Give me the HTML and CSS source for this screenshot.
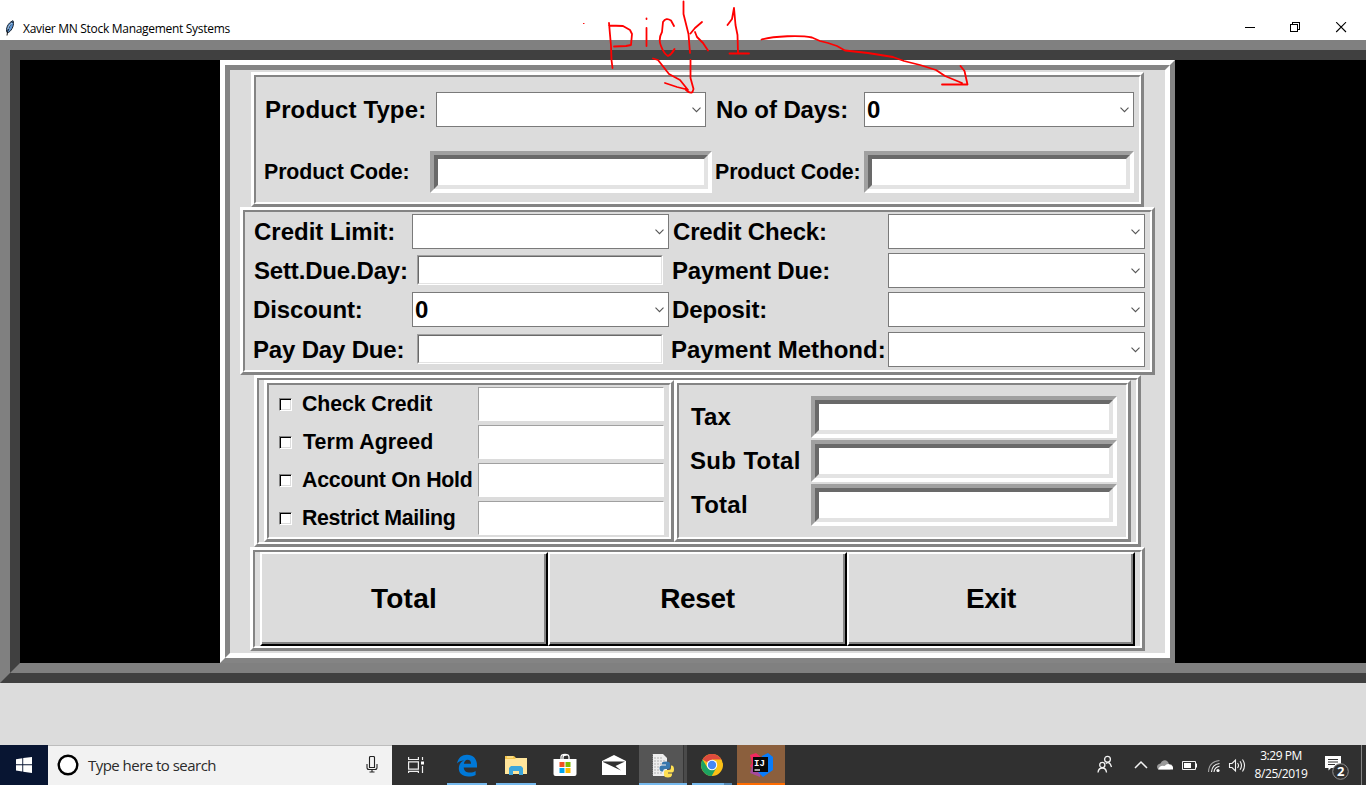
FILE: index.html
```html
<!DOCTYPE html>
<html lang="en">
<head>
<meta charset="utf-8">
<title>Xavier MN Stock Management Systems</title>
<link rel="stylesheet" href="styles.css">
</head>
<body>
<div class="screen">
  <header class="titlebar">
    <svg class="feather" width="12" height="16" viewBox="0 0 12 16"><path d="M3 12.500C1.500 9 3.500 3 9 .7C10.500 4 8.500 10 4.500 12.500Z" fill="#5b93d2" stroke="#17202c" stroke-width="1"/><path d="M8.500 2C5 6 3.600 10 3 15.500" stroke="#111" fill="none"/><path d="M8 3C5.500 5 4.500 7 4 9" stroke="#b8d4f0" fill="none"/></svg>
    <span class="title">Xavier MN Stock Management Systems</span>
    <svg class="winbtns" width="104" height="12" viewBox="0 0 104 12" fill="none" stroke="#000"><path d="M0 5.500H10M45.500 2.500H52.500V9.500H45.500ZM47.500 2.500V.5H54.500V7.500H52.500" shape-rendering="crispEdges"/><path d="M91.200.2L101 10M101 .2L91.200 10" stroke-width="1.100"/></svg>
  </header>

  <main class="outer"><div class="outer-in">
    <div class="panel"><div class="panel-in">

      <section class="frame f1"><div class="frame-in products">
        <label class="lbl t1 wide">Product Type:</label><div class="combo"><svg class="chev" viewBox="0 0 9 6"><path d="M.5.7L4.500 4.700L8.500.7"/></svg></div>
        <label class="lbl t2 snug">No of Days:</label><div class="combo">0<svg class="chev" viewBox="0 0 9 6"><path d="M.5.7L4.500 4.700L8.500.7"/></svg></div>
        <label class="lbl small t3 snug">Product Code:</label><div class="sunken"><div></div></div>
        <label class="lbl small t4 snug">Product Code:</label><div class="sunken e2"><div></div></div>
      </div></section>

      <section class="frame f2"><div class="frame-in credit">
        <label class="lbl">Credit Limit:</label><div class="combo"><svg class="chev" viewBox="0 0 9 6"><path d="M.5.7L4.500 4.700L8.500.7"/></svg></div>
        <label class="lbl r tight">Credit Check:</label><div class="combo"><svg class="chev" viewBox="0 0 9 6"><path d="M.5.7L4.500 4.700L8.500.7"/></svg></div>
        <label class="lbl tight">Sett.Due.Day:</label><div class="sunken thin"><div></div></div>
        <label class="lbl r nudge tight">Payment Due:</label><div class="combo"><svg class="chev" viewBox="0 0 9 6"><path d="M.5.7L4.500 4.700L8.500.7"/></svg></div>
        <label class="lbl nudge snug">Discount:</label><div class="combo">0<svg class="chev" viewBox="0 0 9 6"><path d="M.5.7L4.500 4.700L8.500.7"/></svg></div>
        <label class="lbl r nudge snug">Deposit:</label><div class="combo"><svg class="chev" viewBox="0 0 9 6"><path d="M.5.7L4.500 4.700L8.500.7"/></svg></div>
        <label class="lbl nudge tight">Pay Day Due:</label><div class="sunken thin"><div></div></div>
        <label class="lbl r nudge2">Payment Methond:</label><div class="combo"><svg class="chev" viewBox="0 0 9 6"><path d="M.5.7L4.500 4.700L8.500.7"/></svg></div>
      </div></section>

      <section class="frame f3"><div class="frame-in split">
        <div class="frame f3a"><div class="frame-in checks">
          <div class="check"><i class="box"></i><label class="lbl small snug">Check Credit</label><div class="flat"></div></div>
          <div class="check"><i class="box"></i><label class="lbl small term">Term Agreed</label><div class="flat"></div></div>
          <div class="check"><i class="box"></i><label class="lbl small hold">Account On Hold</label><div class="flat"></div></div>
          <div class="check"><i class="box"></i><label class="lbl small mailing">Restrict Mailing</label><div class="flat"></div></div>
        </div></div>
        <div class="frame f3b"><div class="frame-in totals">
          <label class="lbl wide">Tax</label><div class="sunken"><div></div></div>
          <label class="lbl sub">Sub Total</label><div class="sunken"><div></div></div>
          <label class="lbl wider">Total</label><div class="sunken"><div></div></div>
        </div></div>
      </div></section>

      <section class="frame f4"><div class="frame-in buttons">
        <div class="btn w1 wider"><div>Total</div></div>
        <div class="btn w2 close"><div>Reset</div></div>
        <div class="btn w1 close"><div>Exit</div></div>
      </div></section>

    </div></div>
  </div></main>

  <footer class="taskbar">
    <div class="start"><svg width="16" height="16" viewBox="0 0 16 16" fill="#fff"><path d="M0 2.200L6.300 1.200V7.300H0ZM7.200 1.100L16 0V7.300H7.200ZM0 8.300H6.300V14.500L0 13.600ZM7.200 8.300H16V16L7.200 14.700Z"/></svg></div>
    <div class="search">
      <svg class="cortana" width="22" height="22" viewBox="0 0 22 22"><circle cx="11" cy="11" r="9.300" fill="#fff" stroke="#000" stroke-width="2.400"/></svg>
      <span>Type here to search</span>
      <svg class="mic" width="12" height="17" viewBox="0 0 12 17" fill="none" stroke="#222" stroke-width="1.100"><path d="M3.500 1.500V11.500H8.500V1.500Q8.500.5 7.500.5H4.500Q3.500.5 3.500 1.500ZM1 8V11.500Q1 13.500 3 13.500H9Q11 13.500 11 11.500V8M6 13.500V16M3.500 16H8.500"/></svg>
    </div>
    <div class="app view"><svg width="16" height="17" viewBox="0 0 16 17" fill="none" stroke="#eee" stroke-width="1.200"><path d="M.6 0V2.500H10.400V0M.6 4.800H10.400V12.200H.6ZM.6 16V14.400H10.400V16M14.500 0V3M14.500 9V16"/><path d="M13 4.500H16V7.500H13Z" fill="#fff" stroke="none"/></svg></div>
    <div class="app line"><svg width="22" height="23" viewBox="0 0 22 23"><path d="M1 9.500C2.500 3.500 6 .8 11 .8C17.500.8 21 5.200 21 11.200V13.400H7.700C8 17 10.500 18.500 14 18.500C16.300 18.500 18 18 19.600 17V21C17.500 22 15 22.500 12.300 22.500C6 22.500 2.800 19 2.800 14.300C2.800 10.500 5 7.800 8.200 6.300C5 6.700 2.500 7.800 1 9.500ZM7.900 9.800H15C15 7.300 13.800 5.800 11.600 5.800C9.500 5.800 8.200 7.500 7.900 9.800Z" fill="#0078d7" fill-rule="evenodd"/></svg></div>
    <div class="app line"><svg width="22" height="19" viewBox="0 0 22 19"><path d="M0 0H9L11 2H22V18H0Z" fill="#f4c64e"/><path d="M0 3H10L11 2H22V18H0Z" fill="#ffe59b"/><path d="M4 19V12L6 10H16L18 12V19H14V15H8V19Z" fill="#3ba6dc"/><path d="M2 1H8" stroke="#fff2b8"/></svg></div>
    <div class="app"><svg width="24" height="24" viewBox="0 0 24 24"><path d="M8 7V4Q8 1.300 12 1.300T16 4V7M10 6V4Q10 2 13.500 2" fill="none" stroke="#fff" stroke-width="1.300"/><path d="M.5 6H23.500V21Q23.500 23 21.500 23H2.500Q.5 23 .5 21Z" fill="#fff"/><path d="M6.500 9H11.500V14H6.500Z" fill="#f25022"/><path d="M12.500 9H17.500V14H12.500Z" fill="#7fba00"/><path d="M6.500 15H11.500V20H6.500Z" fill="#00a4ef"/><path d="M12.500 15H17.500V20H12.500Z" fill="#ffb900"/></svg></div>
    <div class="app mail"><svg width="24" height="20" viewBox="0 0 24 20"><path d="M0 6L12 0L24 6V20H0Z" fill="#fff"/><path d="M1 6.500H23L13.500 11L19 15.500L1 7Z" fill="#303030"/></svg></div>
    <div class="app line python"><svg width="24" height="25" viewBox="0 0 24 25"><path d="M2 1H12L16 5V23H2Z" fill="#eee"/><path d="M3 5H12M3 8H15M3 11H12M3 14H10M3 17H9M3 20H12" stroke="#b0b0b0" stroke-dasharray="2 1"/><path d="M1.500 1V23" stroke="#777" stroke-dasharray="1 1"/><path d="M9.500 18Q8.500 17 8.500 15Q8.500 12.500 11 12.500H15V11.500H11V10Q11.300 8.500 15 8.500Q19 8.500 19 10.500V14Q19 16 17 16H14Q12 16 12 18.500H10.500Z" fill="#3777ad"/><path d="M20 12.500H21Q23 13 23 16.500Q23 19.500 21 19.500H17V20.500H21V22Q20.500 24.500 17 24.500Q13 24.500 13 22V19Q13 17 15 17H18Q20 17 20 15Z" fill="#ffe052"/></svg></div>
    <div class="app chrome"><svg width="22" height="22" viewBox="0 0 22 22"><circle cx="11" cy="11" r="11" fill="#fbc116"/><path d="M11 11L1.500 5.500A11 11 0 0 1 20.500 5.500H11Z" fill="#dd4b3e"/><path d="M1.500 5.500A11 11 0 0 0 10.700 22L15.500 13.500L11 11L6.500 13.800Z" fill="#1da362"/><circle cx="11" cy="11" r="5.200" fill="#fff"/><circle cx="11" cy="11" r="4.200" fill="#4688f4"/></svg></div>
    <div class="app idea"><svg width="24" height="24" viewBox="0 0 24 24"><path d="M1 2L7 0L13 5L7 19L1 13L3 10Z" fill="#f2295f"/><path d="M1 20L4 11L12 16L11 24Z" fill="#a54a9c"/><path d="M13 3L19 0L24 4V17L14 24L8 18Z" fill="#087cfa"/><path d="M4 4H19V19H4Z" fill="#080808"/><path d="M5.500 17H11" stroke="#fff" stroke-width="1.300"/><text x="5" y="12.500" class="ij">IJ</text></svg></div>
    <div class="tray">
      <svg width="154" height="24" viewBox="0 0 154 24" fill="none" stroke="#f2f2f2" stroke-width="1.300">
        <circle cx="5.300" cy="12" r="2.600"/><path d="M1 19.500Q1.500 15 5.300 15T9.500 19.500"/><circle cx="10.500" cy="6.300" r="2.900"/><path d="M8.800 10.500Q12.500 7.500 14.500 14"/>
        <path d="M38 15L44 9L50 15" stroke-width="1.500"/>
        <path d="M62 16.500H73Q76 16 75.500 13Q74.500 10.500 72 11.200Q70.500 6.500 66.500 7.500Q64.500 8 63.500 10.500Q60 11 60 14Q60.200 16 62 16.500Z" fill="#999" stroke="none"/><path d="M61 16.500Q63 11.500 67.500 13Q71 9.500 73 12Q76.500 12 76 16.500Z" fill="#fff" stroke="none"/>
        <path d="M85.500 8.500H98.500V16.500H85.500Z" stroke-width="1"/><path d="M87 10H94V15H87ZM99 10.500H100V14.500H99Z" fill="#fff" stroke="none"/>
        <g stroke-width="1.100"><path d="M111.500 19Q112 8.500 122.500 7.500" opacity=".6"/><path d="M114.500 19Q115 11.500 122.500 10.500M117 19Q117.500 14.200 122.500 13.300"/></g><circle cx="121" cy="17.500" r="1.600" fill="#fff" stroke="none"/>
        <path d="M132.500 10.500H135L138.500 7V18L135 14.500H132.500ZM140.500 10Q142.500 12.500 140.500 15M143 8.300Q146 12.500 143 16.700M145.500 6.500Q149.500 12.500 145.500 18.500" stroke-width="1.100"/>
      </svg>
      <div class="clock"><span>3:29 PM</span><span>8/25/2019</span></div>
      <svg class="notif" width="26" height="26" viewBox="0 0 26 26"><path d="M1 1H17V13H7L4.500 15.500V13H1Z" fill="#fff"/><path d="M4 4.500H14M4 7H14M4 9.500H11" stroke="#303030"/><circle cx="16.500" cy="16.500" r="7.800" fill="#303030" stroke="#929292"/><text x="13" y="21" class="count">2</text></svg>
    </div>
  </footer>

  <!-- red pen strokes drawn over the window -->
  <svg class="ink" width="1366" height="140" viewBox="0 0 1366 140">
    <path d="M609 23L611 46L611.500 60L612.500 68M609 25.500L623 26L630 30L632 34L631 45L626 46L614 46.500M646.500 28V46M646.500 18.500V19M674 26L671 20.500Q666 17 663 22L662 32Q658 39 661 46Q664 54 668 56Q672 54 674.500 49M683.500 1.500V14L688.500 34L690 53M702 22L695 28L690.500 33.500M695 32L697 37L703 43L708 50.500M727.500 25L732 19L734 8L735.500 25L737.500 35L738 53M729.500 53.500H749M761.500 39.500C775 36 800 35 812 37.500L820 41L828 43L837 46L845 50.500L868 53L893 57L904 61L920 65L936 70L945 76L962 83M960.500 66L964.500 71L967.500 84.500L942 84.500M653 58.500L658 60L669 74L680 80L688 90M665 83L677 87L687 89.500M690.500 60L690.500 78L693.500 89L692.500 92Q690 94 686 90"/>
    <path class="dot" d="M583.500 23.500H584"/>
  </svg>
</div>
</body>
</html>
```
FILE: styles.css
```css
* { box-sizing: border-box; }
body { margin: 0; background: #dcdcdc; overflow: hidden; }
.screen { position: relative; width: 1366px; height: 785px; overflow: hidden; display: flex; flex-direction: column; font-family: "Liberation Sans", Arial, sans-serif; color: #000; }
svg { display: block; flex: none; }

.titlebar { height: 40px; background: #fff; display: flex; align-items: flex-start; padding: 20px 17px 0 4px; flex: none; }
.title { font: 12px/17px "Open Sans", "Noto Sans", sans-serif; margin-left: 7px; white-space: nowrap; letter-spacing: -0.3px; }
.winbtns { margin: 2px 0 0 auto; }

.outer { height: 643px; width: 1400px; flex: none; border: 10px solid; border-color: #808080 #404040 #404040 #808080; }
.outer-in { height: 100%; border: 10px solid; border-color: #404040 #808080 #808080 #404040; background: #000; padding-left: 200px; }
.panel { width: 955px; height: 603px; border: 5px solid; border-color: #fff #848484 #848484 #fff; }
.panel-in { height: 100%; border: 5px solid; border-color: #848484 #fff #fff #848484; background: #dcdcdc; padding-top: 2px; display: flex; flex-direction: column; }

.frame { border: 3px solid; border-color: #fff #848484 #848484 #fff; flex: none; }
.frame-in { height: 100%; border: 2px solid; border-color: #848484 #fff #fff #848484; background: #dcdcdc; }
.f1 { margin-left: 21px; width: 893px; height: 135px; }
.f2 { margin-left: 10px; width: 915px; height: 168px; }
.f3 { margin-left: 24px; width: 887px; height: 172px; }
.f4 { margin-left: 20px; width: 895px; height: 104px; }

.lbl { font-size: 24px; line-height: 28px; font-weight: bold; white-space: nowrap; }
.small { font-size: 21.33px; }
.wide { letter-spacing: 0.13px; }
.wider { letter-spacing: 0.25px; }
.snug { letter-spacing: -0.1px; }
.tight { letter-spacing: -0.17px; }
.close { letter-spacing: -0.35px; }
.term { letter-spacing: 0.1px; margin-left: 1px; }
.hold { letter-spacing: -0.24px; }
.mailing { letter-spacing: -0.34px; }

.combo { height: 35px; border: 1px solid #7a7a7a; background: #fff; display: flex; align-items: center; justify-content: space-between; padding: 0 4px 0 2px; font-size: 24px; line-height: 28px; font-weight: bold; }
.chev { width: 9px; height: 6px; margin-left: auto; fill: none; stroke: #555; stroke-width: 1.1; }
.sunken { height: 42px; border: 4px solid; border-color: #a0a0a0 #fff #fff #a0a0a0; }
.sunken > div { height: 100%; border: 4px solid; border-color: #696969 #e3e3e3 #e3e3e3 #696969; background: #fff; }
.thin { height: 30px; border-width: 1px; width: 246px; margin: 0 0 1px 5px; }
.thin > div { border-width: 1px; }

.products { display: grid; grid-template-columns: 174px 282px 152px 270px; grid-template-rows: 65px 60px; align-items: center; }
.products .combo { margin: 0 0 0 6px; width: 270px; }
.products .t2 + .combo { margin-left: 0; }
.products .t1 { margin-left: 9px; }
.products .t2 { margin-left: 4px; }
.products .t3 { margin-left: 8px; }
.products .t4 { margin-left: 3px; }

.credit { display: grid; grid-template-columns: 167px 259px 217px 257px; grid-template-rows: 39px 39px 39px 41px; align-items: center; }
.credit .lbl { padding-left: 9px; }
.credit .lbl.r { padding-left: 2px; }
.credit .lbl.nudge { margin-left: -1px; }
.credit .lbl.nudge2 { margin-left: -2px; }
.credit .combo { width: 257px; }

.split { display: flex; padding: 0 5px; }
.f3a { width: 410px; }
.f3b { width: 457px; }
.checks { display: grid; grid-template-rows: repeat(4, 38px); }
.check { display: grid; grid-template-columns: 33px 176px 186px; align-items: center; }
.box { width: 13px; height: 13px; margin-left: 10px; background: #fff; border: 1px solid; border-color: #848484 #fff #fff #848484; box-shadow: inset 1px 1px #000, inset -1px -1px #dcdcdc; }
.flat { height: 34px; background: #fff; border: 1px solid; border-color: #a0a0a0 #fff #fff #a0a0a0; }
.totals { display: grid; grid-template-columns: 132px 306px; grid-template-rows: repeat(3, 44px); align-items: center; padding-top: 10px; }
.totals .lbl { padding-left: 12px; }
.totals .sub { padding-left: 11px; letter-spacing: 0.35px; }

.buttons { display: flex; padding: 0 5px; }
.btn { border: 2px solid; border-color: #fff #000 #000 #fff; font-size: 28px; font-weight: bold; }
.btn > div { height: 100%; border: solid #848484; border-width: 0 2px 2px 0; display: flex; align-items: center; justify-content: center; padding: 2px 0 0 2px; }
.w1 { width: 288px; }
.w2 { width: 299px; }

.taskbar { height: 40px; margin-top: 62px; background: #303030; display: flex; flex: none; }
.start { width: 48px; background: #081532; display: flex; align-items: center; justify-content: center; }
.search { width: 344px; background: #f2f2f2; border-top: 1px solid #bdbdbd; display: flex; align-items: center; padding: 0 14px 2px 9px; }
.search span { font: 15px/20px "Open Sans", "Noto Sans", sans-serif; color: #2b2b2b; margin-left: 9px; white-space: nowrap; letter-spacing: -0.53px; }
.mic { margin-left: auto; }
.app { width: 48px; margin-right: 1px; display: flex; align-items: center; justify-content: center; flex: none; }
.view { margin-right: 3px; }
.line { background: linear-gradient(#76b9ed, #76b9ed) 4px 38px / 40px 2px no-repeat; }
.python { background: linear-gradient(#76b9ed, #76b9ed) 0 38px / 48px 2px no-repeat, linear-gradient(90deg, #555 44px, #353535 44px, #353535 45px, #4a4a4a 45px); }
.chrome { background: linear-gradient(90deg, #76b9ed 32px, #5487b2 32px) 4px 38px / 40px 2px no-repeat; }
.idea { background: linear-gradient(#ff6c00, #ff6c00) 0 38px / 48px 2px no-repeat, #8b5f3d; }
.ij { font: bold 9px "Liberation Mono", monospace; fill: #fff; }
.tray { margin-left: auto; display: flex; align-items: center; padding-right: 4px; }
.clock { width: 70px; display: flex; flex-direction: column; align-items: center; font: 12px/18px "Open Sans", "Noto Sans", sans-serif; color: #fff; letter-spacing: -0.45px; }
.notif { margin: 5px 11px 0 8px; }
.tray > svg:first-child { margin-right: -5px; }
.tray::after { content: ""; width: 1px; height: 40px; background: #858585; }
.count { font: bold 13px "Open Sans", sans-serif; fill: #fff; }

.ink { position: absolute; left: 0; top: 0; fill: none; stroke: #f00; stroke-width: 1.8; stroke-linecap: round; stroke-linejoin: round; }
.ink .dot { stroke-width: 1.1; }
```
